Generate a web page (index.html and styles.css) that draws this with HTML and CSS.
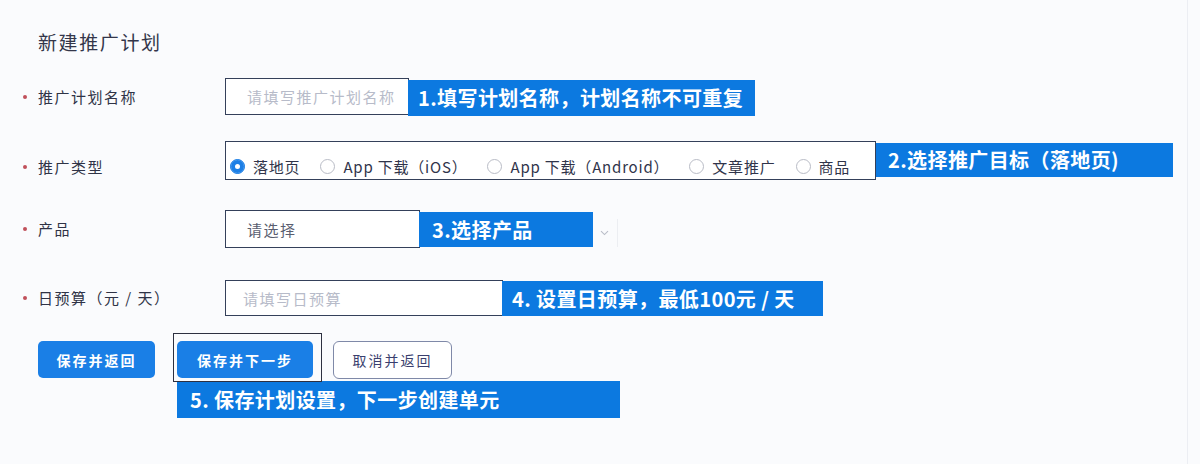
FILE: index.html
```html
<!DOCTYPE html>
<html lang="zh-CN">
<head>
<meta charset="utf-8">
<title>新建推广计划</title>
<link rel="stylesheet" href="styles.css">
</head>
<body>
<div class="card">
  <h1 class="title">新建推广计划</h1>

  <div class="row row-name">
    <div class="label"><span class="dot"></span>推广计划名称</div>
    <div class="field">
      <div class="input input-name"><span class="ph">请填写推广计划名称</span></div>
      <div class="callout callout-1">1.填写计划名称，计划名称不可重复</div>
    </div>
  </div>

  <div class="row row-type">
    <div class="label"><span class="dot"></span>推广类型</div>
    <div class="field">
      <div class="radios">
        <span class="radio checked"><span class="circle"></span><span class="rtext">落地页</span></span>
        <span class="radio"><span class="circle"></span><span class="rtext">App 下载（iOS）</span></span>
        <span class="radio"><span class="circle"></span><span class="rtext">App 下载（Android）</span></span>
        <span class="radio"><span class="circle"></span><span class="rtext">文章推广</span></span>
        <span class="radio"><span class="circle"></span><span class="rtext">商品</span></span>
      </div>
      <div class="callout callout-2">2.选择推广目标（落地页)</div>
    </div>
  </div>

  <div class="row row-product">
    <div class="label"><span class="dot"></span>产品</div>
    <div class="field">
      <div class="input input-product"><span class="val">请选择</span></div>
      <div class="callout callout-3">3.选择产品</div>
      <div class="select-tail">
        <svg class="chev" width="9" height="6" viewBox="0 0 9 6"><path d="M1 1.2 L4.5 4.6 L8 1.2" fill="none" stroke="#b9bdc8" stroke-width="1.1"/></svg>
      </div>
    </div>
  </div>

  <div class="row row-budget">
    <div class="label"><span class="dot"></span>日预算（元 / 天）</div>
    <div class="field">
      <div class="input input-budget"><span class="ph">请填写日预算</span></div>
      <div class="callout callout-4">4. 设置日预算，最低100元 / 天</div>
    </div>
  </div>

  <div class="actions">
    <div class="btn-row">
      <button class="btn btn-primary btn-back">保存并返回</button>
      <div class="focus-box"><button class="btn btn-primary btn-next">保存并下一步</button></div>
      <button class="btn btn-ghost">取消并返回</button>
    </div>
    <div class="callout callout-5">5. 保存计划设置，下一步创建单元</div>
  </div>
</div>
</body>
</html>
```

FILE: styles.css
```css
* { box-sizing: border-box; }

html, body {
  margin: 0;
  padding: 0;
  background: #fafbfd;
  font-family: "Noto Sans CJK SC", "Noto Sans", sans-serif;
  color: #30344a;
}

.card {
  width: 1188px;
  height: 464px;
  border-right: 1px solid #eceef3;
  padding: 30px 0 0 22px;
}

.title {
  margin: 0 0 24px 16px;
  font-size: 19px;
  line-height: 24px;
  font-weight: 400;
  letter-spacing: 1.6px;
  color: #33364a;
}

.row {
  display: flex;
  align-items: center;
}

.label {
  width: 203px;
  flex: none;
  display: flex;
  align-items: center;
  font-size: 15px;
  line-height: 20px;
  letter-spacing: 1.5px;
  color: #2f3346;
}

.dot {
  width: 4px;
  height: 4px;
  border-radius: 50%;
  background: #c0505a;
  margin: 0 11px 0 1px;
}

.field {
  display: flex;
  align-items: flex-start;
}

.input {
  background: #fff;
  border: 1px solid #34405a;
  display: flex;
  align-items: center;
  font-size: 15px;
  letter-spacing: 1.5px;
}

.ph { color: #b7bbc9; }
.val { color: #5a5e70; }

.callout {
  background: #0c79e0;
  color: #fff;
  font-size: 20px;
  font-weight: 700;
  line-height: 24px;
  letter-spacing: 0.4px;
  display: flex;
  align-items: center;
  white-space: nowrap;
}

/* row 1 */
.row-name { height: 38px; }
.input-name { width: 184px; height: 37px; padding-left: 21px; }
.callout-1 { width: 347px; height: 36px; margin: 2px 0 0 -1px; padding-left: 10px; }

/* row 2 */
.row-type { margin-top: 25px; height: 39px; }
.row-type .label { padding-top: 12px; }
.radios {
  width: 651px;
  height: 39px;
  border: 1px solid #34405a;
  background: #fff;
  display: flex;
  align-items: center;
  padding: 11px 0 0 4px;
  gap: 20px;
  font-size: 15px;
  letter-spacing: 0.8px;
  color: #30344a;
}
.radio { display: flex; align-items: center; white-space: nowrap; }
.circle {
  width: 15px;
  height: 15px;
  border-radius: 50%;
  border: 1px solid #b9bcc6;
  background: #fff;
  margin-right: 8px;
  flex: none;
}
.radio.checked .circle {
  background: #1c7fe6;
  border-color: #1c7fe6;
  box-shadow: inset 0 0 0 4px #1c7fe6, inset 0 0 0 8px #fff;
}
.callout-2 { width: 297px; height: 34px; margin-top: 2px; padding-left: 12px; }

/* row 3 */
.row-product { margin-top: 30px; height: 38px; }
.input-product { width: 195px; height: 38px; padding-left: 21px; }
.callout-3 { width: 174px; height: 35px; margin: 2px 0 0 -1px; padding-left: 13px; }
.select-tail {
  width: 25px;
  height: 28px;
  margin-top: 9px;
  border-right: 1px solid #eceef2;
  display: flex;
  align-items: center;
  justify-content: center;
  padding-left: 0;
}
.chev { display: block; margin-right: 2px; }

/* row 4 */
.row-budget { margin-top: 32px; height: 36px; }
.input-budget { width: 278px; height: 36px; padding-left: 17px; }
.callout-4 { width: 321px; height: 35px; margin: 1px 0 0 -1px; padding-left: 10px; }

/* actions */
.actions { margin-top: 17px; padding-left: 16px; }
.btn-row { display: flex; align-items: flex-start; }
.btn {
  font-family: "Noto Sans CJK SC", "Noto Sans", sans-serif;
  font-size: 14px;
  letter-spacing: 2px;
  border-radius: 5px;
  cursor: pointer;
  padding: 0;
}
.btn-primary {
  background: #1a7fe6;
  color: #fff;
  border: none;
  font-weight: 700;
}
.btn-back { width: 117px; height: 37px; margin-top: 8px; }
.focus-box {
  margin-left: 18px;
  border: 1px solid #2d3040;
  padding: 7px 8px 3px 3px;
}
.btn-next { width: 136px; height: 37px; display: block; }
.btn-ghost {
  width: 119px;
  height: 38px;
  margin: 8px 0 0 11px;
  background: #fff;
  border: 1px solid #7f89a8;
  border-radius: 6px;
  color: #3a3f6e;
}
.callout-5 { width: 443px; height: 37px; margin: -1px 0 0 139px; padding-left: 13px; }
```
